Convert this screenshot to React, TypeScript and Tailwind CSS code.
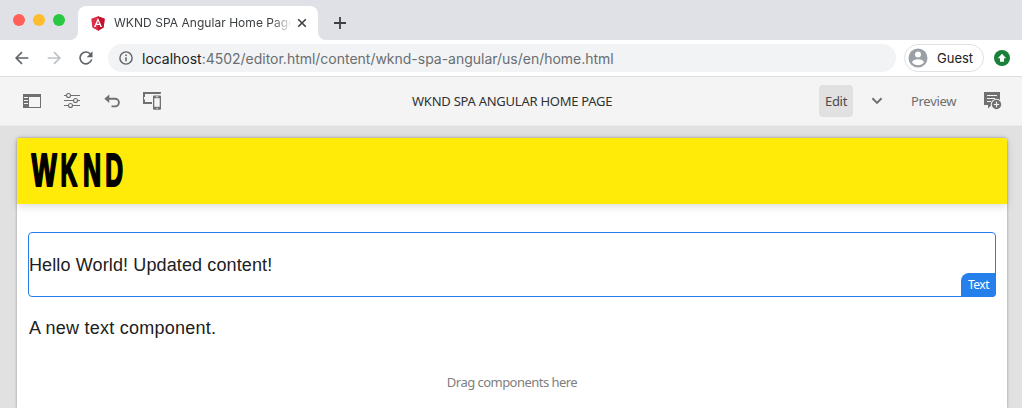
import React from "react";

const TrafficLights = () => (
  <div className="flex gap-2 pl-[13px]">
    <span className="size-3 rounded-full bg-[#ff5f57]" />
    <span className="size-3 rounded-full bg-[#febc2e]" />
    <span className="size-3 rounded-full bg-[#28c840]" />
  </div>
);

const AngularLogo = () => (
  <svg width="14" height="15" viewBox="0 0 14 15">
    <path d="M7 .3 13.7 2.7 12.6 11.5 7 14.7 1.4 11.5.3 2.7Z" fill="#dd2e48" />
    <path d="M7 .3 13.7 2.7 12.6 11.5 7 14.7Z" fill="#c3142f" />
    <path d="M7 2.1 3 11h1.6l.8-2h3.2l.8 2H11Zm0 2.9 1.1 2.7H5.9Z" fill="#fff" fillRule="evenodd" />
  </svg>
);

const TabStrip = () => (
  <div className="flex h-10 shrink-0 items-end bg-[#dfe1e6]">
    <div className="flex h-10 w-[70px] items-center">
      <TrafficLights />
    </div>
    <svg width="8" height="8" viewBox="0 0 8 8" className="shrink-0">
      <path d="M8 0v8H0a8 8 0 0 0 8-8" fill="#fff" />
    </svg>
    <div className="flex h-[34px] w-[240px] items-center rounded-t-lg bg-white">
      <div className="ml-[13px] shrink-0">
        <AngularLogo />
      </div>
      <div className="ml-[9px] w-[176px] overflow-hidden whitespace-nowrap font-['Inter',sans-serif] text-[12px] tracking-[0.04px] text-[#3c4043] [mask-image:linear-gradient(to_right,black_158px,transparent_178px)]">
        WKND SPA Angular Home Page
      </div>
      <svg width="10" height="10" viewBox="0 0 10 10" className="ml-[7px]">
        <path d="m1.2 1.2 7.6 7.6M8.8 1.2 1.2 8.8" stroke="#3c4043" strokeWidth="1.6" />
      </svg>
    </div>
    <svg width="8" height="8" viewBox="0 0 8 8" className="shrink-0">
      <path d="M0 0v8h8a8 8 0 0 1-8-8" fill="#fff" />
    </svg>
    <svg width="12" height="12" viewBox="0 0 12 12" className="mb-[11px] ml-2">
      <path d="M6 0v12M0 6h12" stroke="#3c4043" strokeWidth="1.8" />
    </svg>
  </div>
);

const Arrow = ({ color, flip }: { color: string; flip?: boolean }) => (
  <svg width="14" height="14" viewBox="0 0 14 14" className={flip ? "-scale-x-100" : ""}>
    <path d="M13.3 7H1.5M7 1.1 1.1 7 7 12.9" fill="none" stroke={color} strokeWidth="1.6" />
  </svg>
);

const AddressBar = () => (
  <div className="flex h-[37px] shrink-0 items-center border-b border-[#dadce0] bg-white">
    <div className="ml-[15px] flex w-[93px] shrink-0 items-center">
      <Arrow color="#5f6368" />
      <div className="ml-[18px]">
        <Arrow color="#bdc1c6" flip />
      </div>
      <svg width="14" height="14" viewBox="0 0 14 14" className="ml-[18px]">
        <path d="M11.7 3.4A5.9 5.9 0 1 0 12.7 8.4" fill="none" stroke="#5f6368" strokeWidth="1.6" />
        <path d="M13.5.3v5.9H7.7Z" fill="#5f6368" />
      </svg>
    </div>
    <div className="flex h-7 w-[788px] shrink-0 items-center rounded-full bg-[#f1f3f4]">
      <svg width="14" height="14" viewBox="0 0 14 14" className="ml-[11px]">
        <circle cx="7" cy="7" r="6.1" fill="none" stroke="#5f6368" strokeWidth="1.4" />
        <path d="M7 6.3v4M7 3.6v1.5" stroke="#5f6368" strokeWidth="1.5" />
      </svg>
      <span className="ml-[9px] whitespace-nowrap font-['Inter',sans-serif] text-[14px] tracking-[-0.015px] text-[#6a6e72]">
        <span className="text-[#202124]">localhost</span>:4502/editor.html/content/wknd-spa-angular/us/en/home.html
      </span>
    </div>
    <div className="ml-2 flex h-7 w-20 shrink-0 items-center rounded-full border border-[#dfe1e5]">
      <svg width="20" height="20" viewBox="0 0 20 20" className="ml-[3px]">
        <circle cx="10" cy="10" r="9.5" fill="#9aa0a6" />
        <circle cx="10" cy="6.5" r="3" fill="#fff" />
        <path d="M4 14.2c.8-4 11.2-4 12 0a7.4 7.4 0 0 1-12 0" fill="#fff" />
      </svg>
      <span className="ml-[9px] pt-0.5 font-['Inter',sans-serif] text-[13px] text-[#202124]">Guest</span>
    </div>
    <svg width="16" height="16" viewBox="0 0 16 16" className="ml-[10px]">
      <circle cx="8" cy="8" r="8" fill="#188038" />
      <path d="m8 3.8 4.2 4.4H10v3.5H6V8.200H3.800Z" fill="#fff" />
    </svg>
  </div>
);

const PanelIcon = () => (
  <svg width="18" height="14" viewBox="0 0 18 14">
    <path d="M0 0h18v14H0ZM6 3v10h11V3Z" fill="#707070" fillRule="evenodd" />
    <path d="M1 3.5h4M1 6.5h4M1 9.500h4" stroke="#f4f4f4" />
  </svg>
);

const SlidersIcon = () => (
  <svg width="16" height="16" viewBox="0 0 16 16">
    <path d="M0 2.500h16M0 7.500h16M0 12.500h16" stroke="#707070" />
    <g fill="#f4f4f4" stroke="#707070" strokeWidth="1.1">
      <circle cx="4.500" cy="2.500" r="2" />
      <circle cx="11.500" cy="7.500" r="2" />
      <circle cx="6.500" cy="12.500" r="2" />
    </g>
  </svg>
);

const UndoIcon = () => (
  <svg width="17" height="14" viewBox="0 0 17 14">
    <path d="M4 4.800h7.100a3.800 3.800 0 0 1 0 7.600H7.500" fill="none" stroke="#707070" strokeWidth="1.900" />
    <path d="M.3 4.800 5.300.5v8.600Z" fill="#707070" />
  </svg>
);

const DevicesIcon = () => (
  <svg width="18" height="18" viewBox="0 0 18 18">
    <path d="M17 1.800V1H1v10h8" fill="none" stroke="#707070" strokeWidth="2" />
    <path d="M1.500 5v2.500" stroke="#f4f4f4" />
    <rect x="10" y="3.500" width="8" height="14.300" rx="1" fill="#707070" />
    <path d="M11.300 6.200h5.400v8.600h-5.400Z" fill="#f4f4f4" />
    <path d="M12.800 4.800h2.500M13.300 16.300h1.500" stroke="#f4f4f4" strokeWidth=".9" />
  </svg>
);

const AnnotateIcon = () => (
  <svg width="18" height="18" viewBox="0 0 18 18">
    <path d="M0 0h16v13H7.500L4 16.500V13H0Z" fill="#707070" />
    <path d="M3 3.500h10M3 6.500h8M3 9.500h4" stroke="#f4f4f4" />
    <circle cx="12.500" cy="12.500" r="5.700" fill="#f4f4f4" />
    <circle cx="12.500" cy="12.500" r="4.700" fill="#707070" />
    <path d="M12.500 9.800v5.400M9.800 12.500h5.400" stroke="#f4f4f4" strokeWidth="1.200" />
  </svg>
);

const EditorBar = () => (
  <div className="grid h-[49px] shrink-0 grid-cols-[1fr_auto_1fr] items-center border-b border-[#ececec] bg-[#f4f4f4] font-['Noto_Sans',sans-serif] text-[13px]">
    <div className="flex items-center pl-[23px]">
      <PanelIcon />
      <div className="ml-[23px]"><SlidersIcon /></div>
      <div className="ml-6"><UndoIcon /></div>
      <div className="ml-[22px]"><DevicesIcon /></div>
    </div>
    <h1 className="w-[202px] whitespace-nowrap pt-px pl-[2px] tracking-[-0.25px] text-[#323232]">
      WKND SPA ANGULAR HOME PAGE
    </h1>
    <div className="flex items-center justify-end pr-5 tracking-[-0.3px]">
      <span className="flex h-8 w-[34px] items-center justify-center rounded bg-[#e1e1e1] pt-px text-[#4b4b4b]">Edit</span>
      <svg width="12" height="8" viewBox="0 0 12 8" className="ml-[18px]">
        <path d="m1.400 1.300 4.600 4.600 4.600-4.600" fill="none" stroke="#707070" strokeWidth="2" />
      </svg>
      <span className="ml-7 w-[46px] pt-px text-[#6e6e6e]">Preview</span>
      <div className="ml-[27px]"><AnnotateIcon /></div>
    </div>
  </div>
);

const WkndLogo = () => (
  <svg width="100" height="64" viewBox="0 0 100 64" role="img" aria-label="WKND">
    <g
      fontFamily="'Liberation Sans', sans-serif"
      fontWeight="700"
      fontSize="46.5"
      fill="#000"
      stroke="#000"
      strokeWidth="2.2"
      strokeLinejoin="round"
    >
      <text transform="translate(2.600 46.800) scale(.575 1)">W</text>
      <text transform="translate(31.500 46.800) scale(.5 1)">K</text>
      <text transform="translate(54 46.800) scale(.54 1)">N</text>
      <text transform="translate(76.200 46.800) scale(.53 1)">D</text>
    </g>
  </svg>
);

const SitePage = () => (
  <div className="mt-3 ml-[17px] flex w-[990px] flex-1 flex-col rounded-t-[3px] bg-white shadow-[0_0_3px_rgba(0,0,0,0.35)]">
    <header className="flex h-[66px] shrink-0 items-center rounded-t-[3px] bg-[#ffea08] pl-3 shadow-[0_2px_8px_rgba(0,0,0,0.15)]">
      <WkndLogo />
    </header>
    <main className="flex flex-col px-[11px] pt-7 font-['Liberation_Sans',sans-serif] text-[18px] text-[#202020]">
      <section className="relative flex h-[65px] items-center rounded-[4px] border border-[#2680eb]">
        <p className="pt-px tracking-[0.12px]">Hello World! Updated content!</p>
        <span className="absolute -right-px -bottom-px flex h-6 w-[35px] items-center justify-center rounded-tl-lg rounded-br-[4px] bg-[#2680eb] font-['Noto_Sans',sans-serif] text-[12px] tracking-[-0.45px] text-white">
          Text
        </span>
      </section>
      <p className="mt-[17px] pl-px leading-7 tracking-[0.25px]">A new text component.</p>
      <p className="mt-[30px] text-center font-['Noto_Sans',sans-serif] text-[13px] leading-5 tracking-[-0.53px] text-[#808080]">
        Drag components here
      </p>
    </main>
  </div>
);

export default function App() {
  return (
    <div className="flex h-[408px] w-[1022px] flex-col overflow-hidden bg-[#e1e1e1]">
      <TabStrip />
      <AddressBar />
      <EditorBar />
      <SitePage />
    </div>
  );
}
